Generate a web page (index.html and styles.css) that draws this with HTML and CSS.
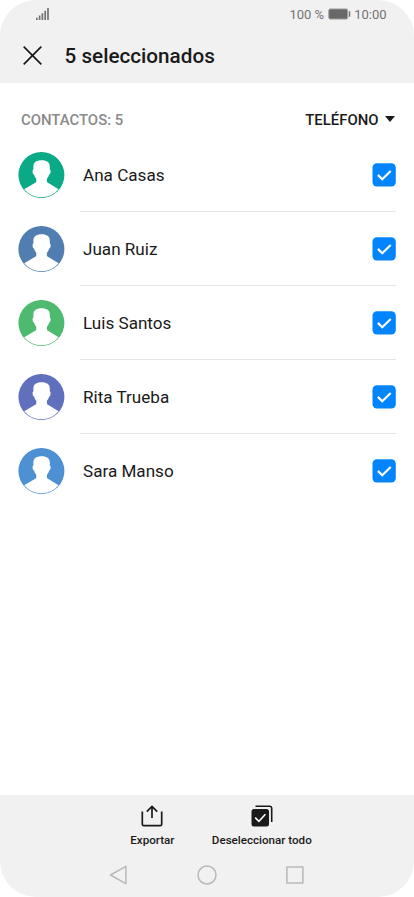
FILE: index.html
```html
<!DOCTYPE html>
<html lang="es">

<head>
    <meta charset="UTF-8">
    <meta name="viewport" content="width=device-width, initial-scale=1.0">
    <title>Seleccionar contactos</title>
    <link rel="stylesheet" href="styles.css">
</head>

<body>
    <svg class="sprite" aria-hidden="true">
        <symbol id="person" viewBox="0 0 47 46">
            <circle cx="23.400" cy="23" r="23" fill="currentColor"/>
            <path fill="#fff" d="M23.600 8.300c5.400 0 8.300 2.300 8.200 6.500v2.800c1.300.2 1.100 4.500-.7 4.900-.4 1.900-1 3-2.200 4.300v2.100c0 1.100.5 1.500 1.500 2L40.600 37.200A22.300 22.300 0 0 1 6.200 37.200L16.800 30.900c1-.5 1.500-.9 1.500-2v-2.100c-1.200-1.300-1.800-2.400-2.200-4.300-1.800-.4-2-4.700-.7-4.900v-2.800c-.1-4.200 2.800-6.500 8.200-6.500z"/>
        </symbol>
        <symbol id="check" viewBox="0 0 24 24">
            <rect x=".5" y=".3" width="23.300" height="23.300" rx="4.500" fill="#0085ff"/>
            <path d="M5.900 11.900l4.300 4.300 8.500-8.200" fill="none" stroke="#fff" stroke-width="2.200"/>
        </symbol>
    </svg>

    <div class="screen">
        <header class="header">
            <div class="status-bar">
                <svg class="signal" width="13" height="12" viewBox="0 0 13 12">
                    <path d="M.8 12V9.800M3.600 12V7.600M6.400 12V5.200M9.200 12V2.800M12 12V0" stroke="#737373" stroke-width="1.700"/>
                </svg>
                <div class="status-right">
                    <span>100 %</span>
                    <svg width="23" height="12" viewBox="0 0 23 12">
                        <rect x=".7" y=".9" width="19" height="10.200" rx="1.500" fill="#686868" stroke="#a8a8a8"/>
                        <path d="M21.500 3.300v5.400" stroke="#777" stroke-width="1.500"/>
                    </svg>
                    <span>10:00</span>
                </div>
            </div>
            <div class="title-bar">
                <svg width="19" height="19" viewBox="0 0 19 19">
                    <path d="M.7.700l17.600 17.600M18.300.700L.7 18.300" stroke="#1a1a1a" stroke-width="1.700"/>
                </svg>
                <h1>5 seleccionados</h1>
            </div>
        </header>

        <main>
            <div class="list-header">
                <span class="count">CONTACTOS: 5</span>
                <div class="source">
                    <span>TELÉFONO</span>
                    <svg class="arrow" width="10" height="6" viewBox="0 0 10 6">
                        <path d="M0 0h10L5 6z" fill="#1a1a1a"/>
                    </svg>
                </div>
            </div>
            <ul class="contacts">
                <li class="contact">
                    <svg class="avatar teal"><use href="#person"/></svg>
                    <div class="row"><span>Ana Casas</span><svg class="checkbox"><use href="#check"/></svg></div>
                </li>
                <li class="contact">
                    <svg class="avatar steel"><use href="#person"/></svg>
                    <div class="row"><span>Juan Ruiz</span><svg class="checkbox"><use href="#check"/></svg></div>
                </li>
                <li class="contact">
                    <svg class="avatar green"><use href="#person"/></svg>
                    <div class="row"><span>Luis Santos</span><svg class="checkbox"><use href="#check"/></svg></div>
                </li>
                <li class="contact">
                    <svg class="avatar indigo"><use href="#person"/></svg>
                    <div class="row"><span>Rita Trueba</span><svg class="checkbox"><use href="#check"/></svg></div>
                </li>
                <li class="contact">
                    <svg class="avatar blue"><use href="#person"/></svg>
                    <div class="row"><span>Sara Manso</span><svg class="checkbox"><use href="#check"/></svg></div>
                </li>
            </ul>
        </main>

        <footer class="footer">
            <div class="actions">
                <div class="action">
                    <svg width="22" height="22" viewBox="0 0 22 22" fill="none" stroke="#1a1a1a" stroke-width="1.700">
                        <path d="M1.300 6.500v12.700q0 1.500 1.500 1.500h16.400q1.500 0 1.500-1.500V6.500"/>
                        <path d="M11 13V1.500M5.800 6.700L11 1.500l5.200 5.200"/>
                    </svg>
                    <span>Exportar</span>
                </div>
                <div class="action">
                    <svg width="22" height="22" viewBox="0 0 22 22" fill="none">
                        <path d="M4.500 1.300h14q2.200 0 2.200 2.200V17" stroke="#1a1a1a" stroke-width="1.600"/>
                        <rect x=".5" y="4" width="17.500" height="17.500" rx="2.500" fill="#1a1a1a"/>
                        <path d="M4.200 12.600l3.700 3.700 6.500-7" stroke="#fff" stroke-width="1.600"/>
                    </svg>
                    <span>Deseleccionar todo</span>
                </div>
            </div>
            <nav class="nav">
                <svg width="20" height="20" viewBox="0 0 20 20">
                    <path d="M1.500 10L16.900 1.300v17.400z"/>
                </svg>
                <svg width="20" height="20" viewBox="0 0 20 20">
                    <circle cx="10" cy="10" r="9"/>
                </svg>
                <svg width="20" height="20" viewBox="0 0 20 20">
                    <rect x="1.900" y="2" width="16" height="16"/>
                </svg>
            </nav>
        </footer>
    </div>
</body>

</html>
```

FILE: styles.css
```css
* {
    box-sizing: border-box;
}

body {
    margin: 0;
    background: #fff;
    color: #1a1a1a;
    font-family: Roboto, sans-serif;
}

svg {
    display: block;
    flex-shrink: 0;
}

.sprite {
    display: none;
}

.screen {
    display: flex;
    flex-direction: column;
    width: 414px;
    height: 897px;
    border-radius: 36px;
    overflow: hidden;
}

.header {
    height: 83px;
    background: #f1f1f1;
}

.status-bar {
    display: flex;
    justify-content: space-between;
    align-items: center;
    height: 28px;
    padding: 0 27.5px 0 36px;
    color: #737373;
    font-size: 13px;
}

.status-right {
    display: flex;
    align-items: center;
    gap: 3.5px;
}

.title-bar {
    display: flex;
    align-items: center;
    gap: 23px;
    height: 55px;
    padding-left: 22.5px;
}

.title-bar h1 {
    margin: 0;
    font-size: 20.7px;
    font-weight: 500;
}

main {
    flex: 1;
}

.list-header {
    display: flex;
    justify-content: space-between;
    align-items: center;
    height: 55px;
    padding: 18px 19.5px 0 21px;
    font-size: 14.9px;
    font-weight: 500;
}

.count {
    color: #8a8a8a;
}

.source {
    display: flex;
    align-items: center;
    gap: 6px;
}

.arrow {
    margin-bottom: 2px;
}

.contacts {
    margin: 0;
    padding: 0;
    list-style: none;
}

.contact {
    display: flex;
    align-items: center;
    height: 74px;
    padding: 0 18px;
}

.avatar {
    width: 47px;
    height: 46px;
    margin-right: 15px;
}

.row {
    display: flex;
    flex: 1;
    align-items: center;
    justify-content: space-between;
    height: 74px;
    padding-left: 3px;
    border-bottom: 1px solid #e5e5e5;
    font-size: 17.1px;
}

.contact:last-child .row {
    border-bottom-color: transparent;
}

.checkbox {
    width: 24px;
    height: 24px;
}

.teal {
    color: #0aaa87;
}

.steel {
    color: #507eb0;
}

.green {
    color: #4dba70;
}

.indigo {
    color: #6070bd;
}

.blue {
    color: #4d90d3;
}

.footer {
    height: 102px;
    background: #f1f1f1;
}

.actions {
    display: flex;
    justify-content: center;
    gap: 37.5px;
    height: 70px;
    padding: 10px 0 0 28px;
}

.action {
    display: flex;
    flex-direction: column;
    align-items: center;
    gap: 6px;
    font-size: 11.6px;
    font-weight: 500;
}

.nav {
    display: flex;
    justify-content: center;
    gap: 68px;
}

.nav svg {
    fill: none;
    stroke: #b9b9b9;
    stroke-width: 1.5px;
    stroke-linejoin: round;
}
```
